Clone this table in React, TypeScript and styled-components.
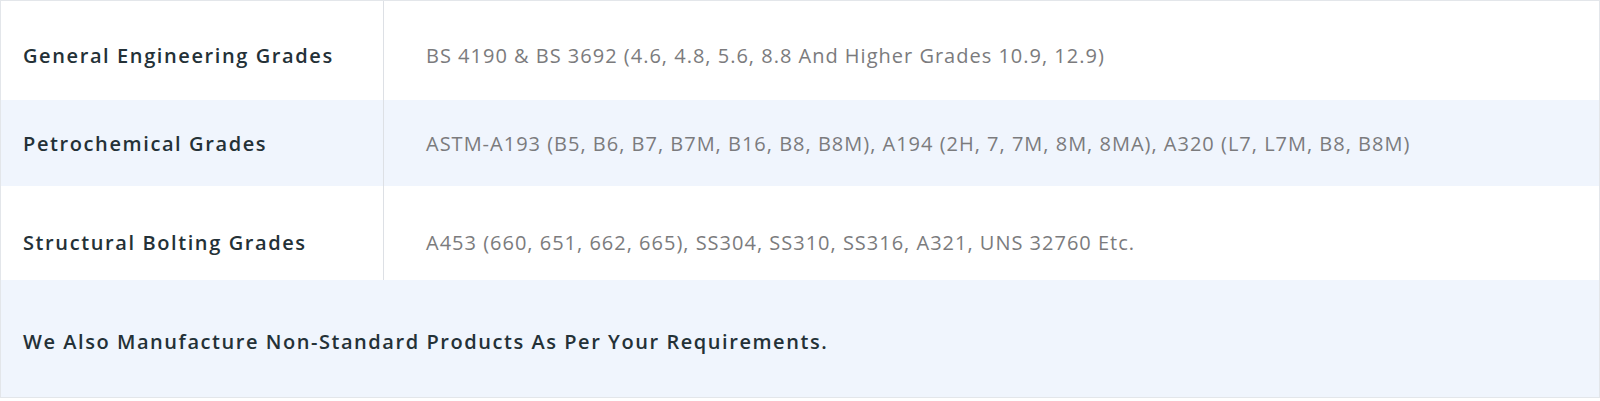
import React from "react";
import styled, { createGlobalStyle } from "styled-components";

const GlobalStyle = createGlobalStyle`
  html, body {
    margin: 0;
    padding: 0;
    background: #ffffff;
  }
  body {
    font-family: "Open Sans", "Liberation Sans", sans-serif;
  }
`;

const Table = styled.div`
  width: 1600px;
  box-sizing: border-box;
  border: 1px solid #e3e6ea;
  display: flex;
  flex-direction: column;
`;

const Row = styled.div<{ $h: number; $alt?: boolean }>`
  display: flex;
  align-items: stretch;
  height: ${({ $h }) => $h}px;
  background-color: ${({ $alt }) => ($alt ? "#f0f5fd" : "#ffffff")};
`;

const Label = styled.div<{ $pt: number }>`
  width: 383px;
  flex-shrink: 0;
  box-sizing: border-box;
  display: flex;
  align-items: center;
  padding: ${({ $pt }) => $pt}px 0 0 22px;
  border-right: 1px solid #dde0e5;
  color: #243137;
  font-size: 20px;
  font-weight: 600;
  letter-spacing: 1.6px;
`;

const Value = styled.div<{ $pt: number }>`
  flex: 1;
  display: flex;
  align-items: center;
  padding: ${({ $pt }) => $pt}px 0 0 42px;
  color: #7b7b7d;
  font-size: 20px;
  font-weight: 400;
  letter-spacing: 1px;
`;

const Note = styled.div<{ $pt: number }>`
  flex: 1;
  display: flex;
  align-items: center;
  padding: ${({ $pt }) => $pt}px 0 0 22px;
  color: #243137;
  font-size: 20px;
  font-weight: 600;
  letter-spacing: 1.55px;
`;

const rows = [
  {
    label: "General Engineering Grades",
    value: "BS 4190 & BS 3692 (4.6, 4.8, 5.6, 8.8 And Higher Grades 10.9, 12.9)",
    h: 99,
    pt: 9,
  },
  {
    label: "Petrochemical Grades",
    value:
      "ASTM-A193 (B5, B6, B7, B7M, B16, B8, B8M), A194 (2H, 7, 7M, 8M, 8MA), A320 (L7, L7M, B8, B8M)",
    h: 86,
    pt: 0,
    alt: true,
  },
  {
    label: "Structural Bolting Grades",
    value: "A453 (660, 651, 662, 665), SS304, SS310, SS316, A321, UNS 32760 Etc.",
    h: 94,
    pt: 18,
  },
];

export default function App() {
  return (
    <>
      <GlobalStyle />
      <Table>
        {rows.map((r) => (
          <Row key={r.label} $h={r.h} $alt={r.alt}>
            <Label $pt={r.pt}>{r.label}</Label>
            <Value $pt={r.pt}>{r.value}</Value>
          </Row>
        ))}
        <Row $h={117} $alt>
          <Note $pt={5}>
            We Also Manufacture Non-Standard Products As Per Your Requirements.
          </Note>
        </Row>
      </Table>
    </>
  );
}
